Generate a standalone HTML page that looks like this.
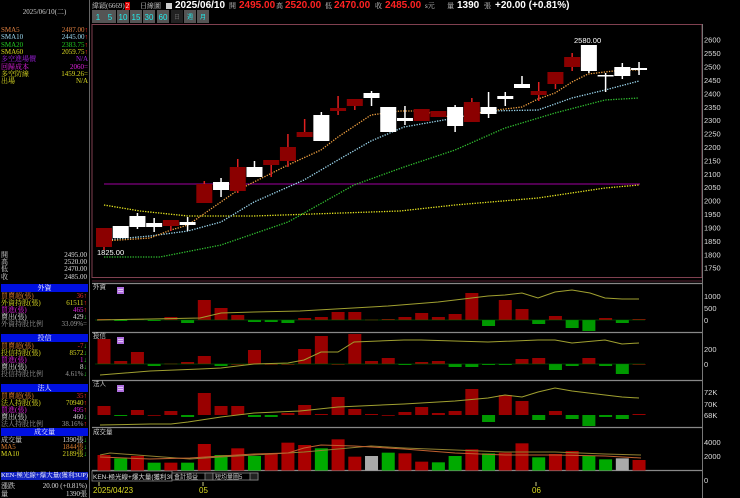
<!DOCTYPE html>
<html><head><meta charset="utf-8">
<style>
*{margin:0;padding:0;box-sizing:border-box}
body{width:740px;height:498px;background:#000;overflow:hidden;position:relative;font-family:"Liberation Serif","Noto Serif CJK SC","Noto Sans CJK TC",serif;color:#ddd}
.a{position:absolute;white-space:nowrap;font-size:7px;line-height:8px}
.r{text-align:right}
.hd{position:absolute;left:1px;width:87px;height:8px;background:#0010e0;color:#fff;font-size:7px;line-height:8px;text-align:center}
.n{position:absolute;top:0;font-family:"Liberation Sans",sans-serif;font-weight:bold;font-size:10px;line-height:12px;white-space:nowrap}
.k{position:absolute;top:2px;font-size:7px;line-height:8px;white-space:nowrap;color:#ccc}
svg{position:absolute;left:0;top:0}
</style></head><body>
<svg id="s" width="740" height="498" xmlns="http://www.w3.org/2000/svg" font-family="Liberation Sans, sans-serif"></svg>

<!-- left panel -->
<div class="a" style="left:0;width:89px;top:8px;text-align:center;color:#ccc">2025/06/10(二)</div>
<div class="a" style="left:1px;top:26px;color:#e08040">SMA5</div><div class="a r" style="left:30px;width:58px;top:26px;color:#e08040">2487.00<span style="color:#f22">↑</span></div>
<div class="a" style="left:1px;top:33px;color:#9cd8f0">SMA10</div><div class="a r" style="left:30px;width:58px;top:33px;color:#9cd8f0">2445.00<span style="color:#f22">↑</span></div>
<div class="a" style="left:1px;top:41px;color:#2c2">SMA20</div><div class="a r" style="left:30px;width:58px;top:41px;color:#2c2">2383.75<span style="color:#f22">↑</span></div>
<div class="a" style="left:1px;top:48px;color:#dd2">SMA60</div><div class="a r" style="left:30px;width:58px;top:48px;color:#dd2">2059.75<span style="color:#f22">↑</span></div>
<div class="a" style="left:1px;top:55px;color:#a020e0">多空進場價</div><div class="a r" style="left:30px;width:58px;top:55px;color:#a020e0">N/A</div>
<div class="a" style="left:1px;top:63px;color:#e020e0">回歸成本</div><div class="a r" style="left:30px;width:58px;top:63px;color:#e020e0">2060=</div>
<div class="a" style="left:1px;top:70px;color:#dd2">多空防線</div><div class="a r" style="left:30px;width:58px;top:70px;color:#dd2">1459.26=</div>
<div class="a" style="left:1px;top:77px;color:#dd2">出場</div><div class="a r" style="left:30px;width:58px;top:77px;color:#dd2">N/A</div>

<div class="a" style="left:1px;top:251px">開</div><div class="a r" style="left:30px;width:57px;top:251px">2495.00</div>
<div class="a" style="left:1px;top:258px">高</div><div class="a r" style="left:30px;width:57px;top:258px">2520.00</div>
<div class="a" style="left:1px;top:265px">低</div><div class="a r" style="left:30px;width:57px;top:265px">2470.00</div>
<div class="a" style="left:1px;top:273px">收</div><div class="a r" style="left:30px;width:57px;top:273px">2485.00</div>

<div class="hd" style="top:284px">外資</div>
<div class="a" style="left:1px;top:292px;color:#e08030">買賣超(張)</div><div class="a r" style="left:40px;width:47px;top:292px;color:#e03030">36↑</div>
<div class="a" style="left:1px;top:299px;color:#dd2">外資持股(張)</div><div class="a r" style="left:40px;width:47px;top:299px;color:#dd2">61511<span style="color:#f22">↑</span></div>
<div class="a" style="left:1px;top:306px;color:#e020e0">買進(張)</div><div class="a r" style="left:40px;width:47px;top:306px;color:#e020e0">465<span style="color:#f22">↑</span></div>
<div class="a" style="left:1px;top:313px;color:#ddd">賣出(張)</div><div class="a r" style="left:40px;width:47px;top:313px;color:#ddd">429<span style="color:#2c2">↓</span></div>
<div class="a" style="left:1px;top:320px;color:#999">外資持股比例</div><div class="a r" style="left:40px;width:47px;top:320px;color:#999">33.09%=</div>

<div class="hd" style="top:334px">投信</div>
<div class="a" style="left:1px;top:342px;color:#e08030">買賣超(張)</div><div class="a r" style="left:40px;width:47px;top:342px;color:#e03030">-7<span style="color:#2c2">↓</span></div>
<div class="a" style="left:1px;top:349px;color:#dd2">投信持股(張)</div><div class="a r" style="left:40px;width:47px;top:349px;color:#dd2">8572<span style="color:#2c2">↓</span></div>
<div class="a" style="left:1px;top:356px;color:#e020e0">買進(張)</div><div class="a r" style="left:40px;width:47px;top:356px;color:#e020e0">1<span style="color:#2c2">↓</span></div>
<div class="a" style="left:1px;top:363px;color:#ddd">賣出(張)</div><div class="a r" style="left:40px;width:47px;top:363px;color:#ddd">8<span style="color:#2c2">↓</span></div>
<div class="a" style="left:1px;top:370px;color:#999">投信持股比例</div><div class="a r" style="left:40px;width:47px;top:370px;color:#999">4.61%<span style="color:#2c2">↓</span></div>

<div class="hd" style="top:384px">法人</div>
<div class="a" style="left:1px;top:392px;color:#e08030">買賣超(張)</div><div class="a r" style="left:40px;width:47px;top:392px;color:#e03030">35<span style="color:#f22">↑</span></div>
<div class="a" style="left:1px;top:399px;color:#dd2">法人持股(張)</div><div class="a r" style="left:40px;width:47px;top:399px;color:#dd2">70940<span style="color:#f22">↑</span></div>
<div class="a" style="left:1px;top:406px;color:#e020e0">買進(張)</div><div class="a r" style="left:40px;width:47px;top:406px;color:#e020e0">495<span style="color:#f22">↑</span></div>
<div class="a" style="left:1px;top:413px;color:#ddd">賣出(張)</div><div class="a r" style="left:40px;width:47px;top:413px;color:#ddd">460<span style="color:#2c2">↓</span></div>
<div class="a" style="left:1px;top:420px;color:#999">法人持股比例</div><div class="a r" style="left:40px;width:47px;top:420px;color:#999">38.16%<span style="color:#f22">↑</span></div>

<div class="hd" style="top:428px">成交量</div>
<div class="a" style="left:1px;top:436px;color:#ddd">成交量</div><div class="a r" style="left:40px;width:47px;top:436px;color:#ddd">1390張<span style="color:#2c2">↓</span></div>
<div class="a" style="left:1px;top:443px;color:#e08030">MA5</div><div class="a r" style="left:40px;width:47px;top:443px;color:#e08030">1844張<span style="color:#2c2">↓</span></div>
<div class="a" style="left:1px;top:450px;color:#dd2">MA10</div><div class="a r" style="left:40px;width:47px;top:450px;color:#dd2">2189張<span style="color:#2c2">↓</span></div>

<div class="a" style="left:1px;top:472px;width:87px;height:8px;background:#1020c0;color:#fff;font-size:6.5px">KEN-極光線+爆大量(獲利3UP)</div>
<div class="a" style="left:1px;top:482px">漲跌</div><div class="a r" style="left:30px;width:57px;top:482px">20.00 (+0.81%)</div>
<div class="a" style="left:1px;top:490px">量</div><div class="a r" style="left:30px;width:57px;top:490px">1390張</div>

<!-- header -->
<div class="k" style="left:92px">緯穎(6669)<span style="background:#d00;color:#fff;padding:0 1px">2</span></div>
<div class="k" style="left:140px">日線圖</div>
<div style="position:absolute;left:166px;top:3px;width:6px;height:6px;background:#ccc"></div>
<div class="n" style="left:175px;color:#fff">2025/06/10</div>
<div class="k" style="left:229px">開</div><div class="n" style="left:239px;color:#f22">2495.00</div>
<div class="k" style="left:276px">高</div><div class="n" style="left:285px;color:#f22">2520.00</div>
<div class="k" style="left:325px">低</div><div class="n" style="left:334px;color:#f22">2470.00</div>
<div class="k" style="left:375px">收</div><div class="n" style="left:385px;color:#f22">2485.00</div>
<div class="k" style="left:425px">s元</div>
<div class="k" style="left:447px">量</div><div class="n" style="left:457px;color:#fff">1390</div>
<div class="k" style="left:484px">張</div>
<div class="n" style="left:495px;color:#fff">+20.00 (+0.81%)</div>

<script>
var s=document.getElementById('s'),h='';
function R(x,y,w,hh,f,st){h+='<rect x="'+x+'" y="'+y+'" width="'+w+'" height="'+hh+'" fill="'+f+'"'+(st?' stroke="'+st+'" stroke-width="0.8"':'')+'/>';}
function L(x1,y1,x2,y2,c,w,d){h+='<line x1="'+x1+'" y1="'+y1+'" x2="'+x2+'" y2="'+y2+'" stroke="'+c+'" stroke-width="'+(w||1)+'"'+(d?' stroke-dasharray="'+d+'"':'')+'/>';}
function P(pts,c,w,d){h+='<polyline fill="none" points="'+pts+'" stroke="'+c+'" stroke-width="'+(w||1)+'"'+(d?' stroke-dasharray="'+d+'"':'')+'/>';}
function T(x,y,t,c,sz,a){h+='<text x="'+x+'" y="'+y+'" fill="'+c+'" font-size="'+(sz||8)+'"'+(a?' text-anchor="'+a+'"':'')+'>'+t+'</text>';}
L(89.5,0,89.5,498,'#666',1);
h+='<rect x="92" y="24.5" width="610" height="253" fill="none" stroke="#804050"/>';
L(702.5,24,702.5,498,'#777');
[283,332,380,427,470].forEach(function(y){L(92,y+0.5,702,y+0.5,'#888',1.2)});
L(92,281,702,281,'#552030',1);
var bx=[['1',92],['5',104],['10',117],['15',130],['30',143],['60',157]];
bx.forEach(function(b){R(b[1],10,12,13,'#555');T(b[1]+6,20,b[0],'#2ee',8,'middle')});
R(171,10,12,13,'#222');T(177,19,'日','#666',6,'middle');R(184,10,12,13,'#555');T(190,19,'週','#2ee',6,'middle');R(197,10,12,13,'#555');T(203,19,'月','#2ee',6,'middle');
for(var p=2600,i=0;p>=1750;p-=50,i++){var y=39.7+(2600-p)*0.2682;T(704,y+3,p,'#ddd',7.5);}
L(104,184,640,184,'#800080',1.2);
P('104,205 140,211 188,216 254,216 371,212 400,211 455,205 538,198 605,188 639,185','#e8e820',1.3,'1.3 1.3');
P('104,257 160,257 221,245 288,222 354,185 404,167 455,150 505,128 555,113 605,100 639,98','#30c030',1.3,'1.3 1.3');
P('104,240 150,236 188,231 221,222 254,202 304,180 338,160 371,141 404,127 455,118 488,111 538,110 572,98 605,90 639,81','#9cd8f0',1.3,'1.3 1.3');
P('104,241 150,238 171,230 188,225 238,190 288,165 321,150 338,137 371,115 400,111 421,111 455,118 488,111 522,107 538,99 555,93 572,82 588,74 622,70 639,70','#f0a040',1.3,'1.3 1.3');
var c=[[228,247,228,250,'r'],[226,238,226,238,'w'],[216,227,213,229,'w'],[223,227,218,232,'w'],[220,226,220,231,'r'],[222,225,217,231,'w'],[184,203,181,203,'r'],[182,190,178,197,'w'],[167,191,159,193,'r'],[167,177,161,177,'w'],[160,165,160,177,'r'],[147,161,134,167,'r'],[132,137,119,137,'r'],[115,141,112,141,'w'],[108,111,96,115,'r'],[99,106,99,110,'r'],[93,98,91,106,'w'],[107,132,107,132,'w'],[118,121,106,125,'w'],[109,121,109,121,'r'],[111,117,111,117,'r'],[107,126,105,132,'w'],[102,122,98,122,'r'],[107,114,92,118,'w'],[96,99,92,106,'w'],[84,88,76,88,'w'],[91,95,82,101,'r'],[72,84,72,89,'r'],[57,67,53,71,'r'],[45,71,45,73,'w'],[75,76,73,92,'w'],[67,76,63,79,'w'],[68,70,62,75,'w']];
c.forEach(function(k,i){var x=104+i*16.72;var col=k[4]=='r'?'#8b0000':'#fff';var wc=k[4]=='r'?'#e02020':'#fff';L(x,k[2],x,k[3],wc,1.5);R(x-8,k[0],16,Math.max(1.5,k[1]-k[0]),col);});
T(97,255,'1825.00','#fff',7.5);T(574,43,'2580.00','#fff',7.5);
function bars(z,arr,sc){arr.forEach(function(v,i){var x=104+i*16.72-6.5;var hh=Math.abs(v)*sc;if(v>=0)R(x,z-hh,13,Math.max(hh,0.8),'#900');else R(x,z,13,hh,'#090');});}
var f=[1,-1,1,-1,3,-3,20,12,5,-2,-2,-3,2,3,8,8,0.5,1,3,7,3,6,27,-6,20,11,-4,4,-8,-11,2,-3,1];
bars(320,f,1);L(95,320,645,320,'#070',0.6);
P('97,320 150,319 200,318 221,313 254,312 300,311 388,306 438,302 455,300 488,296 505,295 522,293 538,298 555,292 572,290 590,293 605,298 622,299 639,299','#a0a030',1);
var t=[25,3,12,-2,0.5,2,8,-2,0,14,0,0,15,28,0,30,3,6,-1,2,3,-3,-3,-1,-1,5,6,-6,-2,6,-2,-10,0];
bars(364,t,1);L(95,364,645,364,'#070',0.6);
P('100,375 150,371 200,369 221,368 254,364 288,363 304,360 321,352 338,352 354,342 404,340 421,340 488,342 538,340 555,340 572,343 605,340 622,344 639,343','#a0a030',1);
var d=[9,-1,5,0,4,-2,22,9,9,-2,-2,2,10,1,18,6,1,0,3,8,2,4,26,-7,20,14,-5,4,-4,-11,-2,-4,1];
bars(415,d,1);
P('100,425 150,424 171,424 188,422 221,417 254,413 300,411 338,407 404,404 455,401 488,398 505,395 522,397 538,392 555,388 572,391 605,395 622,397 639,398','#a0a030',1);
[['外資',289],['投信',338],['法人',386],['成交量',434]].forEach(function(q){T(93,q[1],q[0],'#ccc',6.5);});
[287,337,385].forEach(function(y){R(117,y,7,7,'#b070e0');L(118,y+2.5,123,y+2.5,'#fff',0.6);L(118,y+4.5,123,y+4.5,'#fff',0.6);});
T(704,299,'1000','#ddd',7.5);T(704,311,'500','#ddd',7.5);T(704,323,'0','#ddd',7.5);
T(704,352,'200','#ddd',7.5);T(704,367,'0','#ddd',7.5);
T(704,395,'72K','#ddd',7.5);T(704,407,'70K','#ddd',7.5);T(704,418,'68K','#ddd',7.5);
T(704,445,'4000','#ddd',7.5);T(704,459,'2000','#ddd',7.5);T(704,483,'0','#ddd',7.5);
var v=[[105,'r'],[115,'g'],[108,'r'],[128,'g'],[128,'r'],[128,'g'],[72,'r'],[105,'g'],[85,'r'],[108,'g'],[102,'r'],[68,'r'],[75,'r'],[85,'g'],[58,'r'],[110,'r'],[108,'y'],[98,'g'],[100,'r'],[125,'r'],[127,'g'],[108,'g'],[88,'r'],[100,'g'],[98,'r'],[70,'r'],[112,'g'],[102,'r'],[93,'r'],[108,'g'],[118,'g'],[115,'y'],[120,'r']];
v.forEach(function(q,i){var x=104+i*16.72-6.5;var y=420+q[0]/3;var col=q[1]=='r'?'#a00':q[1]=='g'?'#0a0':'#aaa';R(x,y,13,470.5-y,col);});
P('100,455 110,453 150,456 190,459 220,457 254,455 304,452 338,449 371,446 404,448 455,450 505,452 555,452 605,454 641,455','#908030',1);
P('100,457 150,459 190,458 221,456 254,454 288,453 304,448 321,445 354,446 404,449 455,453 505,455 555,455 605,456 641,458','#c06030',1);
R(92,471,80,10,'#000','#888');T(93,479,'KEN-極光線+爆大量(獲利3UP)','#ddd',6.5);
R(172,473,43,7,'#000','#888');T(174,479,'會計損益','#ccc',6);R(205,473,8,7,'#222','#888');
R(213,473,45,7,'#000','#888');T(215,479,'短均量圖5','#ccc',6);R(250,473,8,7,'#222','#888');
L(99,482,99,486,'#cc8');L(203,482,203,486,'#cc8');L(536,482,536,486,'#cc8');
T(93,493,'2025/04/23','#dd2',8);T(199,493,'05','#dd2',8);T(532,493,'06','#dd2',8);
s.innerHTML=h;
</script>
</body></html>
